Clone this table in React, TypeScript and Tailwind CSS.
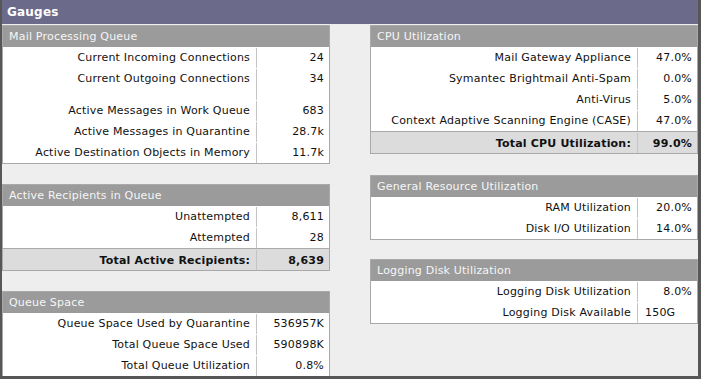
import React from "react";

type Row = { label: string; value: string; left?: boolean; spacer?: boolean };

function Panel({
  title,
  rows,
  total,
  valueW,
  className,
}: {
  title: string;
  rows: Row[];
  total?: Row;
  valueW: string;
  className?: string;
}) {
  return (
    <div className={`border border-[#a9a9a9] bg-white ${className ?? ""}`}>
      <div className="h-[21px] bg-[#9b9b9b] pt-px pl-[6px] leading-[20px] text-[#f6f6f6]">{title}</div>
      {rows.map((r, i) =>
        r.spacer ? (
          <div key={i} className="flex h-[11px]">
            <div className="flex-1 border-r border-[#c4c4c4]" />
            <div className={valueW} />
          </div>
        ) : (
          <div key={i} className="flex h-[21px] pt-px leading-[20px]">
            <div className="flex-1 border-r border-[#c4c4c4] pr-[6px] text-right">{r.label}</div>
            <div className={`${valueW} ${r.left ? "pl-[7px] text-left" : "pr-[5px] text-right"}`}>{r.value}</div>
          </div>
        )
      )}
      {total && (
        <div className="flex h-[22px] border-t border-[#a9a9a9] bg-[#dcdcdc] pt-px font-bold leading-[21px]">
          <div className="flex-1 border-r border-[#c4c4c4] pr-[6px] text-right">{total.label}</div>
          <div className={`${valueW} pr-[5px] text-right`}>{total.value}</div>
        </div>
      )}
    </div>
  );
}

export default function App() {
  return (
    <div
      className="h-[379px] w-[701px] overflow-hidden border-r-[3px] border-b-[3px] border-l-2 border-[#575757] bg-[#eeeeee] text-[11px] tracking-[0.2px] text-[#111]"
      style={{ fontFamily: '"DejaVu Sans", Verdana, sans-serif' }}
    >
      <div className="h-[24px] bg-[#6b6a8b] pl-[5px] text-[12px] font-bold leading-[24px] text-white">Gauges</div>
      <div className="flex justify-between pt-px">
        <div className="flex w-[328px] flex-col">
          <Panel
            title="Mail Processing Queue"
            valueW="w-[72px]"
            rows={[
              { label: "Current Incoming Connections", value: "24" },
              { label: "Current Outgoing Connections", value: "34" },
              { label: "", value: "", spacer: true },
              { label: "Active Messages in Work Queue", value: "683" },
              { label: "Active Messages in Quarantine", value: "28.7k" },
              { label: "Active Destination Objects in Memory", value: "11.7k" },
            ]}
          />
          <Panel
            className="mt-5"
            title="Active Recipients in Queue"
            valueW="w-[72px]"
            rows={[
              { label: "Unattempted", value: "8,611" },
              { label: "Attempted", value: "28" },
            ]}
            total={{ label: "Total Active Recipients:", value: "8,639" }}
          />
          <Panel
            className="mt-5"
            title="Queue Space"
            valueW="w-[72px]"
            rows={[
              { label: "Queue Space Used by Quarantine", value: "536957K" },
              { label: "Total Queue Space Used", value: "590898K" },
              { label: "Total Queue Utilization", value: "0.8%" },
            ]}
          />
        </div>
        <div className="flex w-[328px] flex-col">
          <Panel
            title="CPU Utilization"
            valueW="w-[59px]"
            rows={[
              { label: "Mail Gateway Appliance", value: "47.0%" },
              { label: "Symantec Brightmail Anti-Spam", value: "0.0%" },
              { label: "Anti-Virus", value: "5.0%" },
              { label: "Context Adaptive Scanning Engine (CASE)", value: "47.0%" },
            ]}
            total={{ label: "Total CPU Utilization:", value: "99.0%" }}
          />
          <Panel
            className="mt-[21px]"
            title="General Resource Utilization"
            valueW="w-[59px]"
            rows={[
              { label: "RAM Utilization", value: "20.0%" },
              { label: "Disk I/O Utilization", value: "14.0%" },
            ]}
          />
          <Panel
            className="mt-[19px]"
            title="Logging Disk Utilization"
            valueW="w-[59px]"
            rows={[
              { label: "Logging Disk Utilization", value: "8.0%" },
              { label: "Logging Disk Available", value: "150G", left: true },
            ]}
          />
        </div>
      </div>
    </div>
  );
}
